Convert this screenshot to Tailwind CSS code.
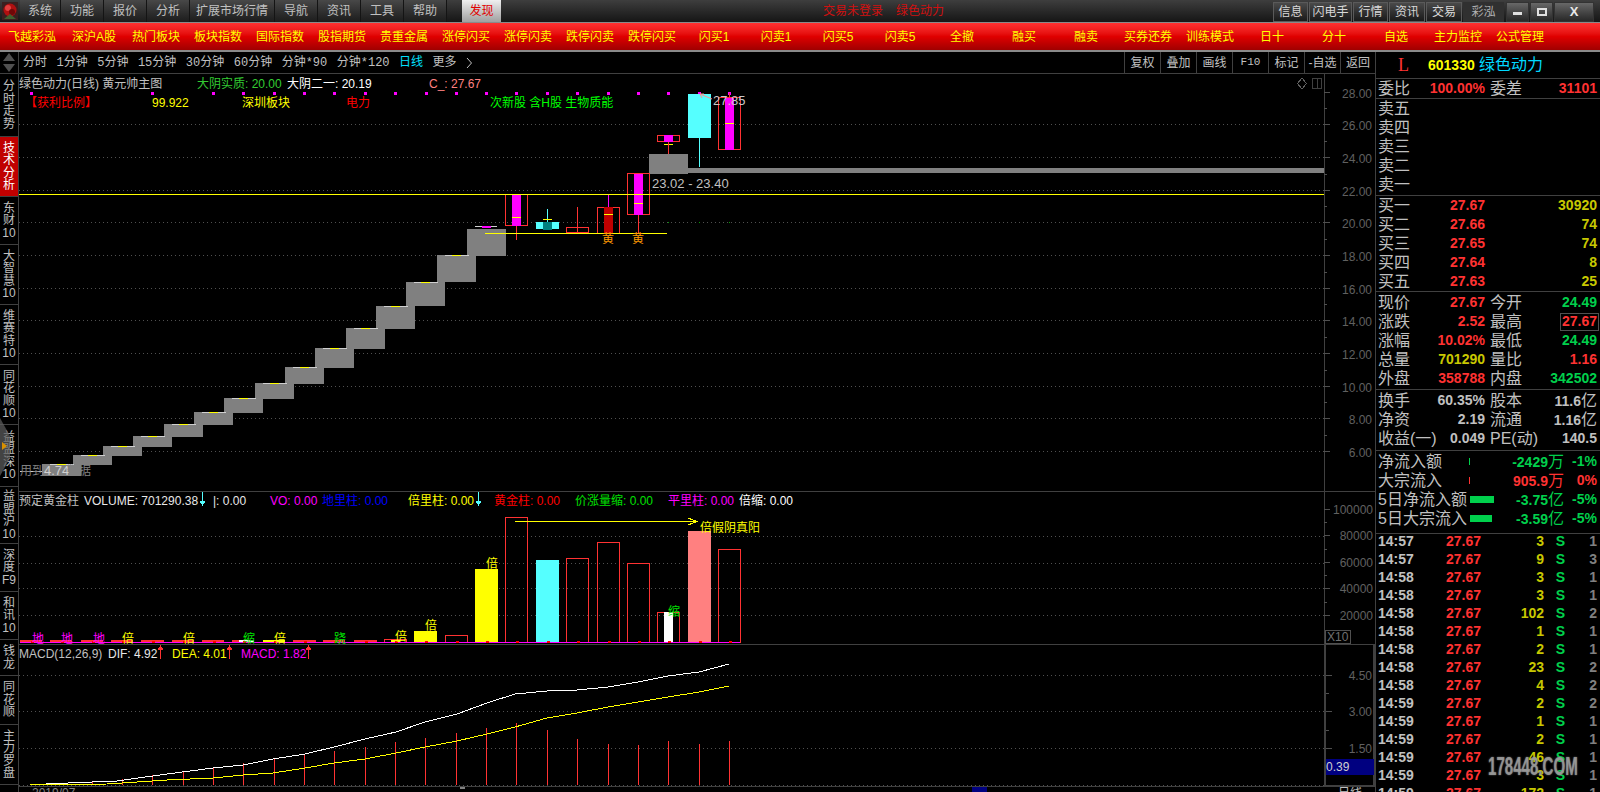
<!DOCTYPE html>
<html lang="zh-CN">
<head>
    <meta charset="UTF-8">
    <title>绿色动力 日线</title>
    <script src="https://cdn.jsdelivr.net/npm/@tailwindcss/browser@4"></script>
</head>
<body class="w-[1600px] h-[792px] overflow-hidden bg-black text-[12px] leading-none text-[#c0c0c0] font-['Liberation_Sans','Noto_Sans_CJK_SC',sans-serif]">

<!-- menu bar -->
<header class="flex h-[22px] bg-linear-to-b from-[#3e3e3e] to-[#161616]">
    <div class="w-[20px] flex items-center justify-center">
        <svg width="16" height="18" viewBox="0 0 16 18">
            <rect width="16" height="18" fill="#3a2020"/>
            <circle cx="8" cy="8" r="6.5" fill="#b01010"/>
            <circle cx="6" cy="6" r="3" fill="#e04040"/>
            <circle cx="10" cy="10" r="3" fill="#700808"/>
            <path d="M2 17 L8 12 L14 17Z" fill="#406030"/>
        </svg>
    </div>
    <div class="flex items-center justify-center w-[41px] bg-linear-to-b from-[#484848] to-[#1c1c1c] border-r border-[#141414]">系统</div>
    <div class="flex items-center justify-center w-[43px] bg-linear-to-b from-[#484848] to-[#1c1c1c] border-r border-[#141414]">功能</div>
    <div class="flex items-center justify-center w-[43px] bg-linear-to-b from-[#484848] to-[#1c1c1c] border-r border-[#141414]">报价</div>
    <div class="flex items-center justify-center w-[43px] bg-linear-to-b from-[#484848] to-[#1c1c1c] border-r border-[#141414]">分析</div>
    <div class="flex items-center justify-center w-[85px] bg-linear-to-b from-[#484848] to-[#1c1c1c] border-r border-[#141414]">扩展市场行情</div>
    <div class="flex items-center justify-center w-[43px] bg-linear-to-b from-[#484848] to-[#1c1c1c] border-r border-[#141414]">导航</div>
    <div class="flex items-center justify-center w-[43px] bg-linear-to-b from-[#484848] to-[#1c1c1c] border-r border-[#141414]">资讯</div>
    <div class="flex items-center justify-center w-[43px] bg-linear-to-b from-[#484848] to-[#1c1c1c] border-r border-[#141414]">工具</div>
    <div class="flex items-center justify-center w-[43px] bg-linear-to-b from-[#484848] to-[#1c1c1c] border-r border-[#141414]">帮助</div>
    <div class="flex items-center justify-center w-[39px] ml-[15px] bg-linear-to-b from-[#f0f0f0] to-[#a0a0a0] text-[#e00000]">发现</div>
    <div class="flex items-center gap-[13px] ml-[322px] text-[#d01010]"><span>交易未登录</span><span>绿色动力</span></div>
    <div class="flex items-center gap-[1px] ml-auto mr-[6px] pt-[1px] text-[#d8d8d8]">
        <div class="flex items-center justify-center w-[35px] h-[20px] border border-[#5a5a5a] bg-linear-to-b from-[#4a4a4a] to-[#1a1a1a]">信息</div>
        <div class="flex items-center justify-center w-[43px] h-[20px] border border-[#5a5a5a] bg-linear-to-b from-[#4a4a4a] to-[#1a1a1a]">闪电手</div>
        <div class="flex items-center justify-center w-[35px] h-[20px] border border-[#5a5a5a] bg-linear-to-b from-[#4a4a4a] to-[#1a1a1a]">行情</div>
        <div class="flex items-center justify-center w-[36px] h-[20px] border border-[#5a5a5a] bg-linear-to-b from-[#4a4a4a] to-[#1a1a1a]">资讯</div>
        <div class="flex items-center justify-center w-[36px] h-[20px] border border-[#5a5a5a] bg-linear-to-b from-[#4a4a4a] to-[#1a1a1a]">交易</div>
        <div class="flex items-center justify-center w-[41px] h-[20px] bg-[#303030] text-[#b0b0b0]">彩泓</div>
        <div class="flex items-center justify-center w-[23px] h-[20px] ml-[1px] border border-[#333] bg-linear-to-b from-[#686868] to-[#282828]"><span class="block w-[9px] h-[3px] mt-[3px] bg-[#e0e0e0]"></span></div>
        <div class="flex items-center justify-center w-[23px] h-[20px] border border-[#333] bg-linear-to-b from-[#686868] to-[#282828]"><span class="block w-[10px] h-[8px] border-2 border-[#e0e0e0]"></span></div>
        <div class="flex items-center justify-center w-[40px] h-[20px] border border-[#333] bg-linear-to-b from-[#686868] to-[#282828] font-bold text-[13px] text-[#e8e8e8]">X</div>
    </div>
</header>

<!-- red shortcut bar -->
<nav class="grid grid-cols-[repeat(25,62px)] pl-[1px] h-[30px] items-center border-t border-b-2 border-[#8a8a8a] bg-linear-to-b from-[#ff3030] via-[#e00000] to-[#a00000] text-[#ffff00] text-center">
    <span>飞越彩泓</span><span>深沪A股</span><span>热门板块</span><span>板块指数</span><span>国际指数</span>
    <span>股指期货</span><span>贵重金属</span><span>涨停闪买</span><span>涨停闪卖</span><span>跌停闪卖</span>
    <span>跌停闪买</span><span>闪买1</span><span>闪卖1</span><span>闪买5</span><span>闪卖5</span>
    <span>全撤</span><span>融买</span><span>融卖</span><span>买券还券</span><span>训练模式</span>
    <span>日十</span><span>分十</span><span>自选</span><span>主力监控</span><span>公式管理</span>
</nav>

<div class="flex h-[740px]">
    <!-- left tabs -->
    <aside class="relative w-[19px] shrink-0 border-r border-[#404040] text-center leading-[12.5px]">
        <div class="flex flex-col items-center justify-center gap-[3px] h-[22px] border-b border-[#404040]">
            <svg width="12" height="8"><path d="M6 0 L12 8 L0 8Z" fill="#505050"/></svg>
            <svg width="12" height="8"><path d="M0 0 L12 0 L6 8Z" fill="#505050"/></svg>
        </div>
        <div class="flex items-center justify-center h-[63px] border-b border-[#404040]"><div>分<br>时<br>走<br>势</div></div>
        <div class="flex items-center justify-center h-[60px] border-b border-[#404040] bg-[#c00000] text-white"><div>技<br>术<br>分<br>析</div></div>
        <div class="flex items-center justify-center h-[48px] border-b border-[#404040]"><div>东<br>财<br>10</div></div>
        <div class="flex items-center justify-center h-[60px] border-b border-[#404040]"><div>大<br>智<br>慧<br>10</div></div>
        <div class="flex items-center justify-center h-[60px] border-b border-[#404040]"><div>维<br>赛<br>特<br>10</div></div>
        <div class="flex items-center justify-center h-[60px] border-b border-[#404040]"><div>同<br>花<br>顺<br>10</div></div>
        <div class="flex items-center justify-center h-[62px] border-b border-[#404040]"><div>益<br>盟<br>深<br>10</div></div>
        <div class="flex items-center justify-center h-[57px] border-b border-[#404040]"><div>益<br>盟<br>沪<br>10</div></div>
        <div class="flex items-center justify-center h-[48px] border-b border-[#404040]"><div>深<br>度<br>F9</div></div>
        <div class="flex items-center justify-center h-[48px] border-b border-[#404040]"><div>和<br>讯<br>10</div></div>
        <div class="flex items-center justify-center h-[36px] border-b border-[#404040]"><div>钱<br>龙</div></div>
        <div class="flex items-center justify-center h-[49px] border-b border-[#404040]"><div>同<br>花<br>顺</div></div>
        <div class="flex items-center justify-center h-[60px] border-b border-[#404040]"><div>主<br>力<br>罗<br>盘</div></div>
        <svg class="absolute left-0 top-[366px]" width="11" height="58" viewBox="0 0 11 58">
            <path d="M0 0 L10 18 L10 40 L0 58Z" fill="#606060" fill-opacity="0.7"/>
            <path d="M2 24 L7 28 L2 32Z" fill="#d89000"/>
        </svg>
    </aside>

    <!-- charts -->
    <main class="w-[1356px] shrink-0">
        <div class="flex items-center h-[22px] pl-[4px] border-b border-[#404040]">
            <div class="flex items-center gap-[9.5px] font-['Liberation_Mono','Noto_Sans_CJK_SC',monospace]">
                <span>分时</span><span>1分钟</span><span>5分钟</span><span>15分钟</span><span>30分钟</span><span>60分钟</span><span>分钟*90</span><span>分钟*120</span>
                <span class="text-[#00e0ff]">日线</span><span>更多</span>
                <svg width="6" height="10" viewBox="0 0 6 10"><path d="M1 0 L5.5 5 L1 10" fill="none" stroke="#c0c0c0"/></svg>
            </div>
            <div class="flex h-full ml-auto">
                <span class="flex items-center justify-center w-[36px] border-l border-[#404040]">复权</span>
                <span class="flex items-center justify-center w-[36px] border-l border-[#404040]">叠加</span>
                <span class="flex items-center justify-center w-[36px] border-l border-[#404040]">画线</span>
                <span class="flex items-center justify-center w-[36px] border-l border-[#404040] text-[11px] font-['Liberation_Mono']">F10</span>
                <span class="flex items-center justify-center w-[36px] border-l border-[#404040]">标记</span>
                <span class="flex items-center justify-center w-[36px] border-l border-[#404040]">-自选</span>
                <span class="flex items-center justify-center w-[35px] border-l border-[#404040]">返回</span>
            </div>
        </div>

        <!-- price pane: svg coordinates equal page coordinates -->
        <svg class="block box-content border-b border-[#404040]" width="1356" height="417" viewBox="19 74 1356 417" font-size="12" shape-rendering="crispEdges">
            <path d="M19 124.5H1324M19 157.5H1324M19 190.5H1324M19 222.5H1324M19 255.5H1324M19 288.5H1324M19 320.5H1324M19 353.5H1324M19 386.5H1324M19 418.5H1324M19 451.5H1324" stroke="#505050" stroke-dasharray="1 3"/>
            <path d="M1324.5 74V491" stroke="#404040"/>
            <path d="M1324 92.5h6M1324 108.5h3M1324 124.5h6M1324 141.5h3M1324 157.5h6M1324 174.5h3M1324 190.5h6M1324 206.5h3M1324 222.5h6M1324 239.5h3M1324 255.5h6M1324 272.5h3M1324 288.5h6M1324 304.5h3M1324 320.5h6M1324 337.5h3M1324 353.5h6M1324 370.5h3M1324 386.5h6M1324 402.5h3M1324 418.5h6M1324 435.5h3M1324 451.5h6" stroke="#505050"/>
            <g fill="#606060" text-anchor="end">
                <text x="1372" y="98">28.00</text><text x="1372" y="130">26.00</text><text x="1372" y="163">24.00</text>
                <text x="1372" y="196">22.00</text><text x="1372" y="228">20.00</text><text x="1372" y="261">18.00</text>
                <text x="1372" y="294">16.00</text><text x="1372" y="326">14.00</text><text x="1372" y="359">12.00</text>
                <text x="1372" y="392">10.00</text><text x="1372" y="424">8.00</text><text x="1372" y="457">6.00</text>
            </g>
            <path d="M1302 78 L1306.5 83.5 L1302 89 L1297.500 83.5Z" fill="none" stroke="#606060"/>
            <rect x="1312.500" y="78.500" width="9" height="10" fill="none" stroke="#404040"/>
            <path d="M1317.500 79V88" stroke="#404040"/>

            <!-- legends -->
            <text x="19" y="88" fill="#c0c0c0">绿色动力(日线) 黄元帅主图</text>
            <text x="197" y="88" fill="#33cc33">大阴实质: 20.00</text>
            <text x="287" y="88" fill="#ffffff">大阴二一: 20.19</text>
            <text x="429" y="88" fill="#ff8080">C_: 27.67</text>
            <text x="25" y="107" fill="#ff0000">【获利比例】</text>
            <text x="152" y="107" fill="#ffff00">99.922</text>
            <text x="242" y="107" fill="#ffff00">深圳板块</text>
            <text x="346" y="107" fill="#ff0000">电力</text>
            <text x="490" y="107" fill="#00ff00">次新股 含H股 生物质能</text>

            <!-- magenta markers -->
            <path d="M30 93.500h3M151 93.500h3M212 93.500h3M242 93.500h3M273 93.500h3M303 93.500h3M333 93.500h3M364 93.500h3M394 93.500h3M425 93.500h3M455 93.500h3M485 93.500h3M515 93.500h3M546 93.500h3M576 93.500h3M607 93.500h3M637 93.500h3M667 93.500h3M698 93.500h3M728 93.500h3" stroke="#ff00ff" stroke-width="3"/>

            <!-- grey step boxes -->
            <g fill="#808080">
                <rect x="42" y="464" width="39" height="12"/><rect x="73" y="455" width="39" height="10"/>
                <rect x="103" y="446" width="39" height="10"/><rect x="133" y="436" width="39" height="11"/>
                <rect x="164" y="424" width="39" height="13"/><rect x="194" y="412" width="39" height="13"/>
                <rect x="224" y="398" width="39" height="15"/><rect x="255" y="383" width="39" height="16"/>
                <rect x="285" y="367" width="39" height="17"/><rect x="315" y="348" width="39" height="20"/>
                <rect x="346" y="328" width="39" height="21"/><rect x="376" y="306" width="39" height="23"/>
                <rect x="406" y="282" width="39" height="24"/><rect x="437" y="255" width="39" height="27"/>
                <rect x="467" y="229" width="39" height="27"/>
                <rect x="649" y="154" width="39" height="20"/>
                <rect x="688" y="168" width="636" height="5"/>
            </g>
            <path d="M20 471.500h22M50 464.500h24M81 455.500h24M111 446.500h24M141 436.500h24M172 424.500h24M202 412.500h24M232 398.500h24M263 383.500h24M293 367.500h24M323 348.500h24M354 328.500h24M384 306.500h24M414 282.500h24M445 255.500h24M475 226.500h22" stroke="#d0d0d0"/>
            <path d="M57 464.500h9M88 455.500h9M118 446.500h9M148 436.500h9M179 424.500h9M209 412.500h9M239 398.500h9M270 383.500h9M300 367.500h9M330 348.500h9M361 328.500h9M391 306.500h9M421 282.500h9M452 255.500h9" stroke="#ffff00"/>

            <!-- candles -->
            <rect x="482" y="226" width="9" height="2" fill="#ff00ff"/>
            <rect x="505.500" y="194.500" width="22" height="31" fill="none" stroke="#ff3232"/>
            <rect x="512" y="195" width="9" height="31" fill="#ff00ff"/>
            <path d="M516.500 226V240" stroke="#ff3232"/><path d="M512 217.500h9" stroke="#ffff00"/>
            <rect x="536" y="222" width="23" height="7" fill="#55ffff"/>
            <rect x="543" y="222" width="9" height="8" fill="#008080"/>
            <path d="M547.500 209V222" stroke="#55ffff"/><path d="M543 219.500h9" stroke="#ffff00"/>
            <rect x="566.500" y="227.500" width="22" height="5" fill="none" stroke="#ff3232"/>
            <path d="M577.500 207V233" stroke="#ff3232"/>
            <rect x="597.500" y="207.500" width="22" height="26" fill="none" stroke="#ff3232"/>
            <rect x="604" y="207" width="9" height="26" fill="#c00000"/>
            <path d="M604 214.500h9" stroke="#ffff00"/><path d="M608.500 195V207" stroke="#ff00ff"/>
            <rect x="627.500" y="173.500" width="22" height="41" fill="none" stroke="#ff3232"/>
            <rect x="634" y="174" width="9" height="41" fill="#ff00ff"/>
            <path d="M634 203.500h9" stroke="#ffff00"/><path d="M638.500 215V233" stroke="#ff3232"/>
            <rect x="657.500" y="135.500" width="22" height="6" fill="none" stroke="#ff3232"/>
            <rect x="664" y="135" width="9" height="7" fill="#ff00ff"/>
            <path d="M664 144.500h9" stroke="#ffff00"/><path d="M668.500 142V154" stroke="#ff3232"/>
            <rect x="688" y="94" width="23" height="44" fill="#55ffff"/>
            <path d="M699.500 138V167" stroke="#55ffff"/>
            <rect x="718.500" y="97.500" width="22" height="52" fill="none" stroke="#ff3232"/>
            <rect x="725" y="98" width="9" height="52" fill="#ff00ff"/>
            <path d="M725 123.500h9" stroke="#ffff00"/><path d="M729.500 93V97" stroke="#ff3232"/>
            <path d="M19 194.500H1324" stroke="#ffff00"/>
            <path d="M485 233.500H667" stroke="#ffff00"/>
            <path d="M668 222.500h1M699 222.500h1M729 222.500h1" stroke="#00a000"/>
            <path d="M700 94 L712 99M700 94l4 0M700 94l2 4" stroke="#ff9090" fill="none" shape-rendering="auto"/>
            <text x="713" y="105" fill="#c8c8c8" font-size="13">27.85</text>
            <text x="652" y="188" fill="#c0c0c0" font-size="13">23.02 - 23.40</text>
            <text x="602" y="243" fill="#ff9900">黄</text>
            <text x="632" y="243" fill="#ff9900">黄</text>
            <text x="20" y="475" fill="#808080">用到</text><text x="44" y="475" fill="#d0d0d0" font-size="13">4.74</text><text x="67" y="475" fill="#808080">数据</text>
        </svg>

        <!-- volume pane -->
        <svg class="block box-content border-b border-[#404040]" width="1356" height="152" viewBox="19 492 1356 152" font-size="12" shape-rendering="crispEdges">
            <path d="M19 536.500H1324M19 563.500H1324M19 588.500H1324M19 615.500H1324" stroke="#505050" stroke-dasharray="1 3"/>
            <path d="M1324.500 492V644" stroke="#404040"/>
            <path d="M1324 509.500h6M1324 522.500h3M1324 535.500h6M1324 549.500h3M1324 562.500h6M1324 575.500h3M1324 588.500h6M1324 602.500h3M1324 615.500h6" stroke="#505050"/>
            <g fill="#606060" text-anchor="end">
                <text x="1373" y="514">100000</text><text x="1373" y="540">80000</text><text x="1373" y="567">60000</text>
                <text x="1373" y="593">40000</text><text x="1373" y="620">20000</text>
            </g>
            <rect x="1325.500" y="630.500" width="25" height="13" fill="none" stroke="#505050"/>
            <text x="1327" y="641" fill="#707070">X10</text>

            <text x="19" y="505" fill="#c0c0c0">预定黄金柱</text>
            <text x="84" y="505" fill="#e8e8e8">VOLUME: 701290.38</text>
            <path d="M202.500 492V504M200 501l2.500 4l2.500-4" stroke="#55ffff" fill="#55ffff"/>
            <text x="213" y="505" fill="#e8e8e8">|: 0.00</text>
            <text x="270" y="505" fill="#ff00ff">VO: 0.00</text>
            <text x="322" y="505" fill="#0000ff">地里柱: 0.00</text>
            <text x="408" y="505" fill="#ffff00">倍里柱: 0.00</text>
            <path d="M478.500 492V504M476 501l2.500 4l2.500-4" stroke="#55ffff" fill="#55ffff"/>
            <text x="494" y="505" fill="#ff0000">黄金柱: 0.00</text>
            <text x="575" y="505" fill="#00e000">价涨量缩: 0.00</text>
            <text x="668" y="505" fill="#ff00ff">平里柱: 0.00</text>
            <text x="739" y="505" fill="#ffffff">倍缩: 0.00</text>

            <!-- volume bars -->
            <path d="M20 641h22M50 641h22M81 641h22M111 641h22M141 641h23M172 641h22M202 641h22M232 641h22M263 641h22M293 641h23M323 641h22M354 641h23" stroke="#ff3232" stroke-width="2"/>
            <rect x="239" y="640" width="15" height="2" fill="#ffffff"/>
            <rect x="263" y="640" width="22" height="2" fill="#ffff00"/>
            <rect x="384.500" y="639.500" width="22" height="3" fill="none" stroke="#ff3232"/>
            <rect x="391" y="640" width="9" height="2" fill="#ffff00"/>
            <rect x="414" y="631" width="23" height="11" fill="#ffff00"/>
            <rect x="445.500" y="635.500" width="22" height="7" fill="none" stroke="#ff3232"/>
            <rect x="475" y="569" width="23" height="73" fill="#ffff00"/>
            <rect x="505.500" y="517.500" width="22" height="125" fill="none" stroke="#ff3232"/>
            <rect x="536" y="560" width="23" height="82" fill="#55ffff"/>
            <rect x="566.500" y="558.500" width="22" height="84" fill="none" stroke="#ff3232"/>
            <rect x="597.500" y="542.500" width="22" height="100" fill="none" stroke="#ff3232"/>
            <rect x="627.500" y="563.500" width="22" height="79" fill="none" stroke="#ff3232"/>
            <rect x="657.500" y="612.500" width="22" height="30" fill="none" stroke="#ff3232"/>
            <rect x="664" y="612" width="9" height="31" fill="#ffffff"/>
            <rect x="688" y="531" width="23" height="112" fill="#ff8080"/>
            <rect x="718.500" y="549.500" width="22" height="93" fill="none" stroke="#ff3232"/>
            <path d="M20 642.500H740" stroke="#ff00ff"/>
            <path d="M31 642h3M61 642h3M92 642h3M122 642h3M152 642h3M183 642h3M213 642h3M243 642h3M274 642h3M304 642h3M334 642h3M365 642h3M395 642h3M425 642h3M456 642h3M486 642h3M516 642h3M547 642h3M577 642h3M608 642h3M638 642h3M668 642h3M699 642h3M729 642h3" stroke="#ff0000" stroke-width="2"/>

            <!-- signal labels -->
            <g fill="#ff00ff"><text x="32" y="643">地</text><text x="61" y="643">地</text><text x="93" y="643">地</text></g>
            <g fill="#ffff00"><text x="122" y="643">倍</text><text x="183" y="643">倍</text><text x="274" y="643">倍</text><text x="395" y="641">倍</text><text x="425" y="630">倍</text><text x="486" y="568">倍</text></g>
            <text x="243" y="643" fill="#00e000">缩</text>
            <text x="334" y="643" fill="#00e000">跷</text>
            <text x="668" y="616" fill="#00e000">缩</text>
            <path d="M515 521.500H697M688 518l9 3.500l-9 3.500" stroke="#ffff00" fill="none"/>
            <text x="700" y="532" fill="#ffff00">倍假阴真阳</text>
        </svg>

        <!-- macd pane -->
        <svg class="block box-content border-b border-[#404040]" width="1356" height="141" viewBox="19 645 1356 141" font-size="12" shape-rendering="crispEdges">
            <path d="M19 675.500H1324M19 711.500H1324M19 748.500H1324M19 785.500H1324" stroke="#505050" stroke-dasharray="1 3"/>
            <path d="M1325 645V786M1374 645V786M1325 785.500H1374" stroke="#404040" stroke-width="2"/>
            <path d="M1326 675.500h6M1326 693.500h3M1326 711.500h6M1326 730.500h3M1326 748.500h6" stroke="#505050"/>
            <g fill="#606060" text-anchor="end">
                <text x="1372" y="680">4.50</text><text x="1372" y="716">3.00</text><text x="1372" y="753">1.50</text>
            </g>
            <rect x="1326" y="759" width="48" height="16" fill="#000080"/>
            <text x="1326" y="771" fill="#d0d0d0">0.39</text>

            <text x="19" y="658" fill="#c0c0c0">MACD(12,26,9)</text>
            <text x="108" y="658" fill="#e8e8e8">DIF: 4.92</text>
            <path d="M160.500 659V647M158 650l2.500-4l2.500 4" stroke="#ff3232" fill="#ff3232"/>
            <text x="172" y="658" fill="#ffff00">DEA: 4.01</text>
            <path d="M229.500 659V647M227 650l2.500-4l2.500 4" stroke="#ff3232" fill="#ff3232"/>
            <text x="241" y="658" fill="#ff00ff">MACD: 1.82</text>
            <path d="M308.500 659V647M306 650l2.500-4l2.500 4" stroke="#ff3232" fill="#ff3232"/>

            <path d="M62.500 785V784M92.500 785V781M122.500 785V779M152.500 785V775M183.500 785V771M213.500 785V767M243.500 785V763M274.500 785V759M304.500 785V755M334.500 785V751M365.500 785V747M395.500 785V742M425.500 785V738M456.500 785V733M486.500 785V728M516.500 785V723M547.500 785V730M577.500 785V739M608.500 785V744M638.500 785V745M668.500 785V741M699.500 785V744M729.500 785V741" stroke="#ff3232"/>
            <polyline fill="none" stroke="#ffffff" points="46,784 68,783 117,781 167,774 213,768 243,765 273,759 305,754 334,747 365,739 396,732 425,722 457,714 487,703 515,694 547,691 577,690 608,687 638,682 668,676 699,672 729,664"/>
            <polyline fill="none" stroke="#ffff00" points="30,785 107,784 167,780 213,778 243,775 273,773 305,768 334,763 365,759 396,753 425,747 457,741 487,734 515,727 547,718 577,713 608,707 638,702 668,697 699,692 729,686"/>
        </svg>

        <!-- time axis, cut by the window -->
        <div class="relative h-[5px] overflow-hidden">
            <span class="absolute left-[13px] top-0 text-[#808080]">2019/07</span>
            <span class="absolute left-[441px] top-0 w-[5px] h-[2px] bg-[#808080]"></span>
            <span class="absolute left-[953px] top-0 w-[15px] h-[5px] bg-[#000080]"></span>
            <span class="absolute left-[1319px] top-0 text-[#c0c0c0]">日线</span>
        </div>
    </main>

    <!-- quote panel -->
    <section class="relative flex-1 border-l border-[#404040] overflow-hidden text-[14px] font-bold">
        <div class="flex items-center h-[27px] border-b border-[#404040]">
            <span class="w-[52px] pl-[22px] text-[18px] font-normal text-[#ff3232] font-['Liberation_Serif']">L</span>
            <span class="w-[51px] text-[#ffff00]">601330</span>
            <span class="text-[16px] font-normal text-[#00d8ff]">绿色动力</span>
        </div>
        <div class="flex items-center h-[20px] pl-[2px] border-b border-[#404040] text-[#ff3232]">
            <span class="flex justify-between w-[107px]"><span class="text-[16px] font-normal text-[#c0c0c0]">委比</span><span>100.00%</span></span>
            <span class="flex justify-between w-[107px] ml-[5px]"><span class="text-[16px] font-normal text-[#c0c0c0]">委差</span><span>31101</span></span>
        </div>
        <div class="h-[97px] border-b border-[#404040] pl-[2px] text-[16px] font-normal leading-[19px]">卖五<br>卖四<br>卖三<br>卖二<br>卖一</div>

        <div class="grid grid-cols-[32px_75px_112px] h-[96px] pl-[2px] border-b border-[#404040] leading-[19px] auto-rows-[19px]">
            <span class="text-[16px] font-normal">买一</span><span class="text-right text-[#ff3232]">27.67</span><span class="text-right text-[#c8c800]">30920</span>
            <span class="text-[16px] font-normal">买二</span><span class="text-right text-[#ff3232]">27.66</span><span class="text-right text-[#c8c800]">74</span>
            <span class="text-[16px] font-normal">买三</span><span class="text-right text-[#ff3232]">27.65</span><span class="text-right text-[#c8c800]">74</span>
            <span class="text-[16px] font-normal">买四</span><span class="text-right text-[#ff3232]">27.64</span><span class="text-right text-[#c8c800]">8</span>
            <span class="text-[16px] font-normal">买五</span><span class="text-right text-[#ff3232]">27.63</span><span class="text-right text-[#c8c800]">25</span>
        </div>

        <div class="relative grid grid-cols-[32px_75px_37px_75px] h-[98px] pt-[1px] pl-[2px] border-b border-[#404040] leading-[19px] auto-rows-[19px]">
            <span class="text-[16px] font-normal">现价</span><span class="text-right text-[#ff3232]">27.67</span><span class="pl-[5px] text-[16px] font-normal">今开</span><span class="text-right text-[#00d04c]">24.49</span>
            <span class="text-[16px] font-normal">涨跌</span><span class="text-right text-[#ff3232]">2.52</span><span class="pl-[5px] text-[16px] font-normal">最高</span><span class="text-right text-[#ff3232]">27.67</span>
            <span class="text-[16px] font-normal">涨幅</span><span class="text-right text-[#ff3232]">10.02%</span><span class="pl-[5px] text-[16px] font-normal">最低</span><span class="text-right text-[#00d04c]">24.49</span>
            <span class="text-[16px] font-normal">总量</span><span class="text-right text-[#c8c800]">701290</span><span class="pl-[5px] text-[16px] font-normal">量比</span><span class="text-right text-[#ff3232]">1.16</span>
            <span class="text-[16px] font-normal">外盘</span><span class="text-right text-[#ff3232]">358788</span><span class="pl-[5px] text-[16px] font-normal">内盘</span><span class="text-right text-[#00d04c]">342502</span>
            <span class="absolute left-[184px] top-[21px] w-[39px] h-[18px] border border-[#505050]"></span>
        </div>

        <div class="grid grid-cols-[48px_59px_37px_75px] h-[61px] pt-[1px] pl-[2px] border-b border-[#404040] leading-[19px] auto-rows-[19px]">
            <span class="text-[16px] font-normal">换手</span><span class="text-right">60.35%</span><span class="pl-[5px] text-[16px] font-normal">股本</span><span class="text-right">11.6<span class="text-[16px] font-normal">亿</span></span>
            <span class="text-[16px] font-normal">净资</span><span class="text-right">2.19</span><span class="pl-[5px] text-[16px] font-normal">流通</span><span class="text-right">1.16<span class="text-[16px] font-normal">亿</span></span>
            <span class="text-[16px] font-normal whitespace-nowrap">收益(一)</span><span class="text-right">0.049</span><span class="pl-[5px] text-[16px] font-normal whitespace-nowrap">PE(动)</span><span class="text-right">140.5</span>
        </div>

        <div class="grid grid-cols-[92px_94px_33px] h-[83px] pt-[1px] pl-[2px] border-b border-[#404040] leading-[19px] auto-rows-[19px]">
            <span class="flex items-center justify-between text-[16px] font-normal whitespace-nowrap">净流入额<span class="w-[1px] h-[7px] bg-[#00d04c]"></span></span><span class="text-right text-[#00d04c]">-2429<span class="text-[16px] font-normal">万</span></span><span class="text-right text-[#00d04c]">-1%</span>
            <span class="flex items-center justify-between text-[16px] font-normal whitespace-nowrap">大宗流入<span class="w-[1px] h-[7px] bg-[#ff3232]"></span></span><span class="text-right text-[#ff3232]">905.9<span class="text-[16px] font-normal">万</span></span><span class="text-right text-[#ff3232]">0%</span>
            <span class="flex items-center text-[16px] font-normal whitespace-nowrap">5日净流入额<span class="ml-[3px] shrink-0 w-[24px] h-[7px] bg-[#00d04c]"></span></span><span class="text-right text-[#00d04c]">-3.75<span class="text-[16px] font-normal">亿</span></span><span class="text-right text-[#00d04c]">-5%</span>
            <span class="flex items-center text-[16px] font-normal whitespace-nowrap">5日大宗流入<span class="ml-[3px] shrink-0 w-[22px] h-[7px] bg-[#00d04c]"></span></span><span class="text-right text-[#00d04c]">-3.59<span class="text-[16px] font-normal">亿</span></span><span class="text-right text-[#00d04c]">-5%</span>
        </div>

        <div class="grid grid-cols-[38px_65px_63px_21px_32px] pl-[2px] auto-rows-[18px] leading-[14px]">
            <span>14:57</span><span class="text-right text-[#ff3232]">27.67</span><span class="text-right text-[#c8c800]">3</span><span class="text-right text-[#00d04c]">S</span><span class="text-right text-[#808080]">1</span>
            <span>14:57</span><span class="text-right text-[#ff3232]">27.67</span><span class="text-right text-[#c8c800]">9</span><span class="text-right text-[#00d04c]">S</span><span class="text-right text-[#808080]">3</span>
            <span>14:58</span><span class="text-right text-[#ff3232]">27.67</span><span class="text-right text-[#c8c800]">3</span><span class="text-right text-[#00d04c]">S</span><span class="text-right text-[#808080]">1</span>
            <span>14:58</span><span class="text-right text-[#ff3232]">27.67</span><span class="text-right text-[#c8c800]">3</span><span class="text-right text-[#00d04c]">S</span><span class="text-right text-[#808080]">1</span>
            <span>14:58</span><span class="text-right text-[#ff3232]">27.67</span><span class="text-right text-[#c8c800]">102</span><span class="text-right text-[#00d04c]">S</span><span class="text-right text-[#808080]">2</span>
            <span>14:58</span><span class="text-right text-[#ff3232]">27.67</span><span class="text-right text-[#c8c800]">1</span><span class="text-right text-[#00d04c]">S</span><span class="text-right text-[#808080]">1</span>
            <span>14:58</span><span class="text-right text-[#ff3232]">27.67</span><span class="text-right text-[#c8c800]">2</span><span class="text-right text-[#00d04c]">S</span><span class="text-right text-[#808080]">1</span>
            <span>14:58</span><span class="text-right text-[#ff3232]">27.67</span><span class="text-right text-[#c8c800]">23</span><span class="text-right text-[#00d04c]">S</span><span class="text-right text-[#808080]">2</span>
            <span>14:58</span><span class="text-right text-[#ff3232]">27.67</span><span class="text-right text-[#c8c800]">4</span><span class="text-right text-[#00d04c]">S</span><span class="text-right text-[#808080]">2</span>
            <span>14:59</span><span class="text-right text-[#ff3232]">27.67</span><span class="text-right text-[#c8c800]">2</span><span class="text-right text-[#00d04c]">S</span><span class="text-right text-[#808080]">2</span>
            <span>14:59</span><span class="text-right text-[#ff3232]">27.67</span><span class="text-right text-[#c8c800]">1</span><span class="text-right text-[#00d04c]">S</span><span class="text-right text-[#808080]">1</span>
            <span>14:59</span><span class="text-right text-[#ff3232]">27.67</span><span class="text-right text-[#c8c800]">2</span><span class="text-right text-[#00d04c]">S</span><span class="text-right text-[#808080]">1</span>
            <span>14:59</span><span class="text-right text-[#ff3232]">27.67</span><span class="text-right text-[#c8c800]">46</span><span class="text-right text-[#00d04c]">S</span><span class="text-right text-[#808080]">1</span>
            <span>14:59</span><span class="text-right text-[#ff3232]">27.67</span><span class="text-right text-[#c8c800]">3</span><span class="text-right text-[#00d04c]">S</span><span class="text-right text-[#808080]">1</span>
            <span>14:59</span><span class="text-right text-[#ff3232]">27.67</span><span class="text-right text-[#c8c800]">172</span><span class="text-right text-[#00d04c]">S</span><span class="text-right text-[#808080]">1</span>
        </div>

        <!-- site watermark -->
        <span class="absolute left-[112px] top-[701px] inline-block origin-left scale-x-[.58] whitespace-nowrap text-[26px] text-[#a0a0a0]/80 [text-shadow:0_0_2px_#808080]">178448.COM</span>
    </section>
</div>
</body>
</html>
